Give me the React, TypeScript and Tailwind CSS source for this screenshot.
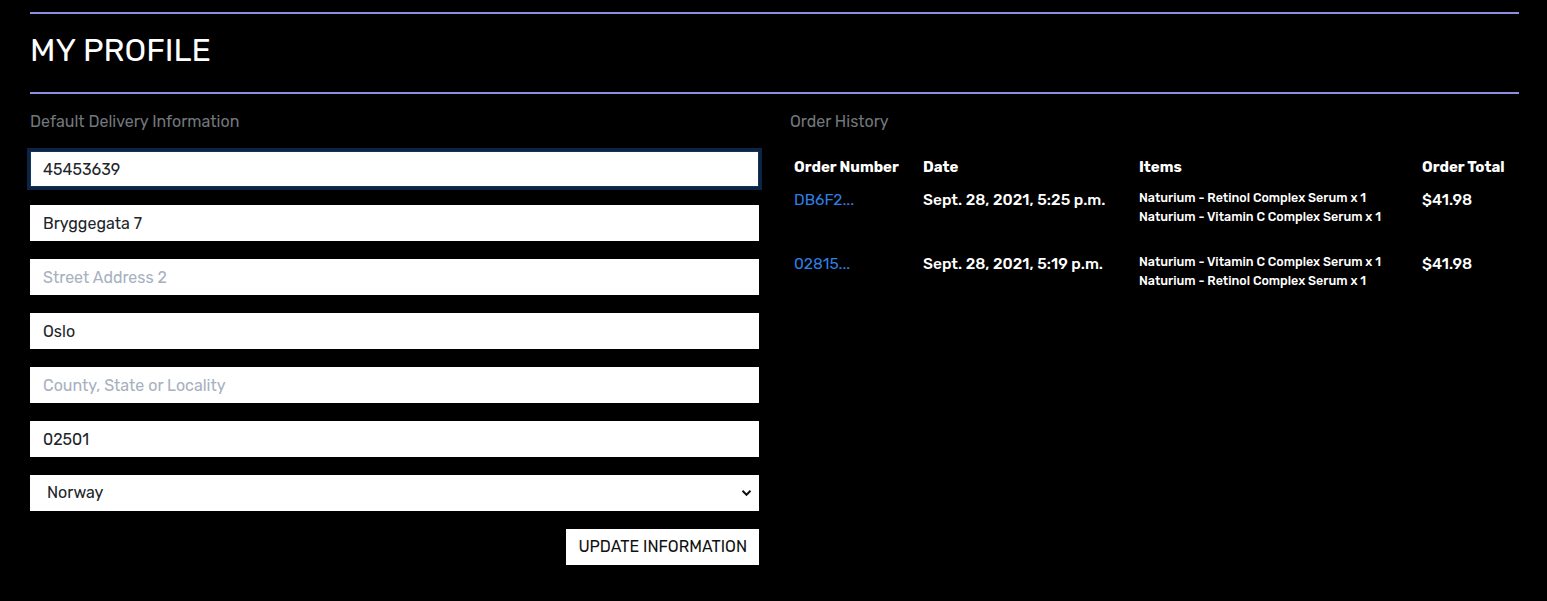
import React from "react";

const font = { fontFamily: '"Rubik", Inter, "Noto Sans", sans-serif' };

function Field({ value, placeholder, focused }: { value?: string; placeholder?: string; focused?: boolean }) {
  return (
    <input
      readOnly
      defaultValue={value}
      placeholder={placeholder}
      className={
        "block w-full h-9 bg-white px-[12px] text-[16px] text-[#212529] placeholder:text-[#a7b1c0] outline-none mb-[18px] " +
        (focused ? "ring-[3px] ring-[#0c2544] border border-[#11335c]" : "border border-white")
      }
      style={font}
    />
  );
}

export default function App() {
  const orders = [
    {
      id: "DB6F2...",
      date: "Sept. 28, 2021, 5:25 p.m.",
      items: ["Naturium - Retinol Complex Serum x 1", "Naturium - Vitamin C Complex Serum x 1"],
      total: "$41.98",
    },
    {
      id: "02815...",
      date: "Sept. 28, 2021, 5:19 p.m.",
      items: ["Naturium - Vitamin C Complex Serum x 1", "Naturium - Retinol Complex Serum x 1"],
      total: "$41.98",
    },
  ];
  return (
    <div className="bg-black min-h-[601px] w-full pl-[30px] pr-[28px] pt-3 pb-9 text-white" style={font}>
      <div className="border-t-2 border-[#8b8fe0] h-[80px] flex items-center">
        <h1 className="text-[32px] leading-none font-normal mt-[-6px]">MY PROFILE</h1>
      </div>
      <div className="border-t-2 border-[#8b8fe0] grid grid-cols-2 gap-x-[31px] pt-[18px]">
        <div>
          <p className="text-[16px] text-[#72777c] leading-[20px] mb-[19px]">Default Delivery Information</p>
          <Field value="45453639" focused />
          <Field value="Bryggegata 7" />
          <Field placeholder="Street Address 2" />
          <Field value="Oslo" />
          <Field placeholder="County, State or Locality" />
          <Field value="02501" />
          <div className="relative h-9 bg-white mb-[18px] flex items-center pl-[17px] text-[16px] text-[#212529]">
            <span>Norway</span>
            <svg className="absolute right-[7px] top-[14px]" width="11" height="8" viewBox="0 0 11 8">
              <path d="M1.5 1.8 L5.5 5.8 L9.5 1.8" fill="none" stroke="#111" strokeWidth="2" />
            </svg>
          </div>
          <div className="flex justify-end">
            <button className="h-9 bg-white text-[#111] text-[16px] px-[12px]" style={font}>
              UPDATE INFORMATION
            </button>
          </div>
        </div>
        <div>
          <p className="text-[16px] text-[#72777c] leading-[20px] mb-[25px]">Order History</p>
          <div className="grid grid-cols-[129px_216px_283px_1fr] pl-1">
            <div className="text-[15px] font-bold leading-[20px]">Order Number</div>
            <div className="text-[15px] font-bold leading-[20px]">Date</div>
            <div className="text-[15px] font-bold leading-[20px]">Items</div>
            <div className="text-[15px] font-bold leading-[20px]">Order Total</div>
            {orders.map((o) => (
              <React.Fragment key={o.id}>
                <div className="pt-[13px] h-[64px] text-[15.5px] leading-[20px] text-[#2f7fe0]">{o.id}</div>
                <div className="pt-[13px] text-[15.5px] leading-[20px] font-medium">{o.date}</div>
                <div className="pt-[11px] text-[12.5px] leading-[19px] font-medium">
                  {o.items.map((i) => (
                    <div key={i}>{i}</div>
                  ))}
                </div>
                <div className="pt-[13px] text-[15.5px] leading-[20px] font-medium">{o.total}</div>
              </React.Fragment>
            ))}
          </div>
        </div>
      </div>
    </div>
  );
}
